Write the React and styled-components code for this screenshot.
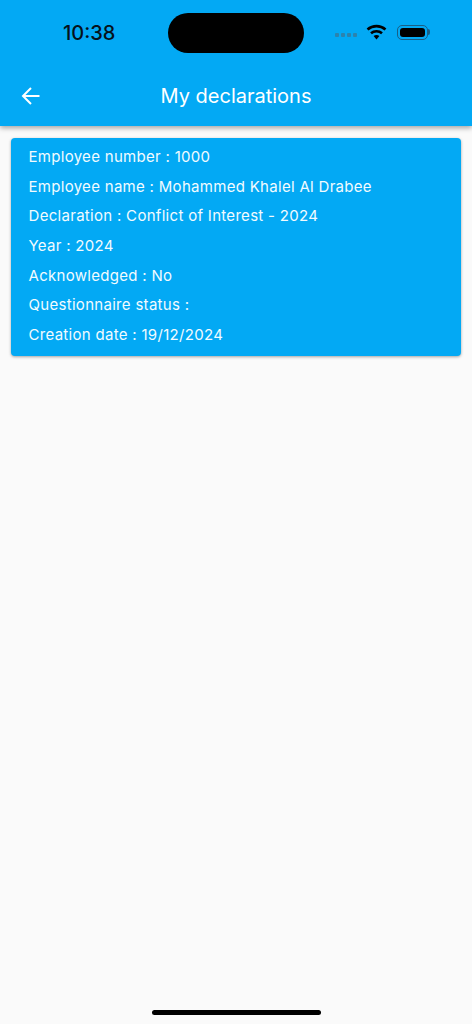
import styled, { createGlobalStyle } from "styled-components";

const Global = createGlobalStyle`
	html, body {
		margin: 0;
		padding: 0;
		background: #fafafa;
	}
	* {
		box-sizing: border-box;
	}
`;
const Page = styled.div`
	width: 472px;
	height: 1024px;
	overflow: hidden;
	display: flex;
	flex-direction: column;
	background: #fafafa;
	font-family: Inter, "Liberation Sans", sans-serif;
`;
const Header = styled.header`
	height: 126px;
	flex: none;
	background: #03a9f4;
	box-shadow: 0 2px 5px rgba(0, 0, 0, 0.35);
	padding-top: 13px;
`;
const StatusBar = styled.div`
	height: 40px;
	display: grid;
	grid-template-columns: 168px 136px 1fr;
	align-items: center;
`;
const Time = styled.div`
	padding-left: 63px;
	font-size: 20px;
	font-weight: 500;
	line-height: 38px;
	color: #06121a;
`;
const Island = styled.div`
	height: 40px;
	border-radius: 20px;
	background: #000;
`;
const StatusIcons = styled.div`
	display: flex;
	align-items: center;
	padding: 0 0 2px 31px;
`;
const Dots = styled.div`
	display: flex;
	gap: 2px;
	margin: 5px 9px 0 0;
	& > span {
		width: 4px;
		height: 4px;
		border-radius: 1px;
		background: #2c83ad;
	}
`;
const Battery = styled.div`
	width: 31px;
	height: 15px;
	margin-left: 10px;
	padding: 2px;
	border: 1px solid #1a5f85;
	border-radius: 5px;
	position: relative;
	&::before {
		content: "";
		display: block;
		height: 100%;
		border-radius: 3px;
		background: #000;
	}
	&::after {
		content: "";
		position: absolute;
		right: -3px;
		top: 3px;
		width: 2px;
		height: 6px;
		border-radius: 0 2px 2px 0;
		background: #1a5f85;
	}
`;
const AppBar = styled.div`
	height: 60px;
	margin-top: 13px;
	display: flex;
	align-items: center;
	justify-content: center;
	position: relative;
`;
const Back = styled.button`
	position: absolute;
	left: 21px;
	top: 20px;
	width: 20px;
	height: 20px;
	padding: 0;
	border: 0;
	background: none;
	display: flex;
`;
const Title = styled.h1`
	margin: 0;
	font-size: 20px;
	font-weight: 400;
	color: #fff;
`;
const Content = styled.main`
	flex: 1;
	padding: 12px 11px 0;
`;
const Card = styled.section`
	height: 218px;
	padding: 4px 18px 0 17.5px;
	border-radius: 4px;
	background: #03a9f4;
	box-shadow: 0 1px 3px rgba(0, 0, 0, 0.35);
`;
const Row = styled.div`
	height: 29.65px;
	font-size: 15px;
	letter-spacing: 0.3px;
	line-height: 29.65px;
	color: #f2fbff;
	white-space: nowrap;
`;
const HomeArea = styled.div`
	flex: none;
	height: 14px;
	display: flex;
	justify-content: center;
`;
const HomeBar = styled.div`
	width: 169px;
	height: 5px;
	border-radius: 3px;
	background: #000;
`;

const rows = [
	"Employee number : 1000",
	"Employee name : Mohammed Khalel Al Drabee",
	"Declaration : Conflict of Interest - 2024",
	"Year : 2024",
	"Acknowledged : No",
	"Questionnaire status :",
	"Creation date : 19/12/2024",
];

const App = () => {
	return (
		<Page>
			<Global />
			<Header>
				<StatusBar>
					<Time>10:38</Time>
					<Island />
					<StatusIcons>
						<Dots>
							<span></span>
							<span></span>
							<span></span>
							<span></span>
						</Dots>
						<svg width="21" height="16" viewBox="0 0 21 16" fill="none">
							<path d="M1.5 5.6C6.8 1 14.2 1 19.5 5.6" stroke="#000" strokeWidth="2.6" />
							<path d="M5 9.2C8 6.6 13 6.6 16 9.2" stroke="#000" strokeWidth="2.6" />
							<path d="M7.6 12L10.5 15.4L13.4 12C11.6 10.6 9.4 10.6 7.6 12Z" fill="#000" />
						</svg>
						<Battery />
					</StatusIcons>
				</StatusBar>
				<AppBar>
					<Back>
						<svg width="20" height="20" viewBox="0 0 20 20" fill="none">
							<path d="M18.5 10H2.5M10 2L2 10L10 18" stroke="#fff" strokeWidth="2" />
						</svg>
					</Back>
					<Title>My declarations</Title>
				</AppBar>
			</Header>
			<Content>
				<Card>
					{rows.map((row) => (
						<Row key={row}>{row}</Row>
					))}
				</Card>
			</Content>
			<HomeArea>
				<HomeBar />
			</HomeArea>
		</Page>
	);
};
export default App;
